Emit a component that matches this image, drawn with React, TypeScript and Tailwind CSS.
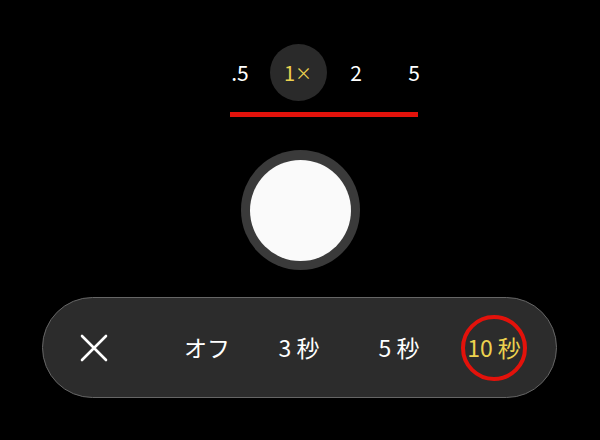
const font = { fontFamily: '"Noto Sans CJK JP", "Noto Sans", sans-serif' }

function ZoomRow() {
  const items = ['.5', '1×', '2', '5']
  return (
    <div className="flex pl-[211px] pt-[44px]">
      {items.map((v, i) => (
        <div key={i} className="flex h-[57px] w-[58px] items-center justify-center">
          {i == 1 ? (
            <div className="flex h-[57px] w-[57px] items-center justify-center rounded-full bg-[#2a2a2a] text-[20px] text-[#ecd24f]">
              1<span className="text-[17px]">×</span>
            </div>
          ) : (
            <span className="text-[21px] text-white">{v}</span>
          )}
        </div>
      ))}
    </div>
  )
}

export default function App() {
  return (
    <div className="h-[440px] w-[600px] overflow-hidden bg-black" style={font}>
      <ZoomRow />
      {/* annotation line */}
      <div className="ml-[230px] mt-[11px] h-[5px] w-[188px] bg-[#e3120b]" />

      <div className="mx-auto mt-[33px] flex h-[120px] w-[119px] items-center justify-center rounded-full bg-[#3a3a3a]">
        <div className="h-[101px] w-[101px] rounded-full bg-[#fafafa]" />
      </div>

      <div className="ml-[42px] mt-[27px] flex h-[101px] w-[515px] items-center rounded-full border border-[#666] bg-[#2c2c2c] pl-[11px] text-[23px] text-white">
        <div className="flex w-[80px] justify-center">
          <svg width="28" height="28" viewBox="0 0 28 28" fill="none" stroke="white" strokeWidth="2.6" strokeLinecap="round">
            <path d="M2 2L26 26M26 2L2 26" />
          </svg>
        </div>
        <div className="ml-[33px] w-[80px] text-center">オフ</div>
        <div className="ml-[12px] w-[80px] text-center">3 秒</div>
        <div className="ml-[20px] w-[80px] text-center">5 秒</div>
        <div className="relative ml-[15px] w-[80px] text-center text-[#ecd24f]">
          10 秒
          <div className="absolute left-[7px] top-1/2 h-[66px] w-[66px] -translate-y-1/2 rounded-full border-4 border-[#e3120b]" />
        </div>
      </div>
    </div>
  )
}
